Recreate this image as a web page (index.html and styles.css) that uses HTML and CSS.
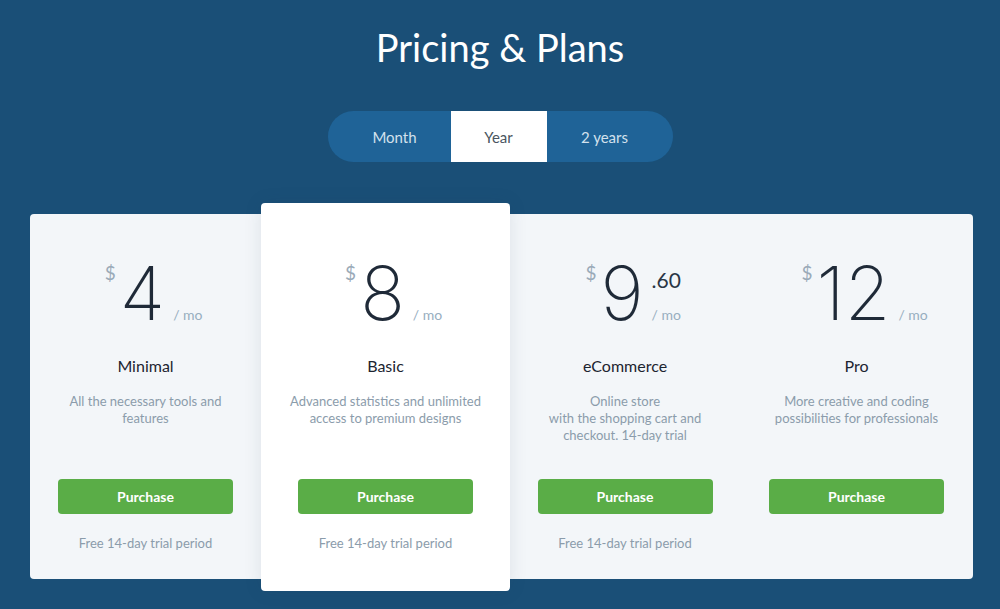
FILE: index.html
```html
<!DOCTYPE html>
<html>
<head>
<meta charset="utf-8">
<link rel="stylesheet" href="styles.css">
</head>
<body>
<div class="page">
  <h1 class="title">Pricing &amp; Plans</h1>
  <div class="toggle">
    <div class="seg seg-month">Month</div>
    <div class="seg seg-year active">Year</div>
    <div class="seg seg-2y">2 years</div>
  </div>
  <div class="plans">
    <div class="plan">
      <div class="price"><span class="num">4<span class="cur">$</span><span class="side"><span class="cents"></span><span class="per">/ mo</span></span></span></div>
      <div class="name">Minimal</div>
      <div class="desc">All the necessary tools and<br>features</div>
      <button class="buy">Purchase</button>
      <div class="trial">Free 14-day trial period</div>
    </div>
    <div class="plan featured">
      <div class="price"><span class="num">8<span class="cur">$</span><span class="side"><span class="cents"></span><span class="per">/ mo</span></span></span></div>
      <div class="name">Basic</div>
      <div class="desc">Advanced statistics and unlimited<br>access to premium designs</div>
      <button class="buy">Purchase</button>
      <div class="trial">Free 14-day trial period</div>
    </div>
    <div class="plan">
      <div class="price"><span class="num">9<span class="cur">$</span><span class="side"><span class="cents">.60</span><span class="per">/ mo</span></span></span></div>
      <div class="name">eCommerce</div>
      <div class="desc">Online store<br>with the shopping cart and<br>checkout. 14-day trial</div>
      <button class="buy">Purchase</button>
      <div class="trial">Free 14-day trial period</div>
    </div>
    <div class="plan">
      <div class="price"><span class="num">12<span class="cur">$</span><span class="side"><span class="cents"></span><span class="per">/ mo</span></span></span></div>
      <div class="name">Pro</div>
      <div class="desc">More creative and coding<br>possibilities for professionals</div>
      <button class="buy">Purchase</button>
      <div class="trial"></div>
    </div>
  </div>
</div>
</body>
</html>
```

FILE: styles.css
```css
* { box-sizing: border-box; }
html, body { margin: 0; padding: 0; }
body {
  background: #1a4f77;
  font-family: "Lato", "Noto Sans", sans-serif;
  width: 1000px;
  height: 609px;
  overflow: hidden;
}
.page {
  display: flex;
  flex-direction: column;
  align-items: center;
}
.title {
  margin: 23px 0 0;
  font-weight: 400;
  font-size: 38px;
  line-height: 48px;
  color: #ffffff;
}
.toggle {
  margin-top: 40px;
  display: flex;
  height: 51px;
  border-radius: 26px;
  background: #1f6397;
  overflow: hidden;
}
.seg {
  display: flex;
  align-items: center;
  justify-content: center;
  font-size: 15px;
  color: #d3e1ed;
}
.seg-month { width: 123px; padding-left: 11px; }
.seg-year { width: 96px; }
.seg-2y { width: 126px; padding-right: 10px; }
.seg.active { background: #ffffff; color: #4a5560; }
.plans {
  margin-top: 52px;
  align-self: flex-start;
  margin-left: 30px;
  width: 943px;
  display: grid;
  grid-template-columns: 231px 249px 230px 233px;
  background: #f3f6f9;
  border-radius: 4px;
  height: 365px;
}
.plan {
  display: flex;
  flex-direction: column;
  align-items: center;
  padding-top: 46px;
}
.plan.featured {
  background: #ffffff;
  border-radius: 4px;
  margin-top: -11px;
  height: 388px;
  padding-top: 57px;
  box-shadow: 0 0 18px rgba(30, 60, 90, 0.10);
  position: relative;
}
.price {
  display: flex;
  justify-content: center;
  height: 70px;
  padding-right: 6px;
}
.num {
  position: relative;
  font-family: "Inter", "Roboto", sans-serif;
  font-size: 74px;
  line-height: 70px;
  font-weight: 150;
  color: #1f2a38;
  margin-top: -2px;
}
.cur {
  position: absolute;
  right: 100%;
  top: 5px;
  margin-right: 4px;
  font-family: "Lato", sans-serif;
  font-size: 19px;
  line-height: 20px;
  color: #9aaab8;
  font-weight: 400;
}
.side {
  position: absolute;
  left: 100%;
  top: 3px;
  margin-left: 8px;
  display: flex;
  flex-direction: column;
  justify-content: space-between;
  height: 62px;
  font-family: "Lato", sans-serif;
}
.cents {
  font-size: 21px;
  color: #2a3646;
  line-height: 24px;
  font-weight: 400;
  padding-top: 7px;
}
.per {
  font-size: 14px;
  color: #97aec0;
  line-height: 16px;
  font-weight: 400;
  white-space: nowrap;
}
.name {
  margin-top: 26px;
  font-size: 16px;
  line-height: 20px;
  color: #1c2430;
}
.desc {
  margin-top: 17px;
  font-size: 13px;
  line-height: 17px;
  color: #8b9cab;
  text-align: center;
  height: 86px;
}
.buy {
  width: 175px;
  height: 35px;
  border: 0;
  border-radius: 4px;
  background: #5aad47;
  color: #ffffff;
  font-family: inherit;
  font-weight: 700;
  font-size: 14px;
  padding: 0;
}
.trial {
  margin-top: 21px;
  font-size: 13px;
  line-height: 16px;
  color: #8b9cab;
}
```
